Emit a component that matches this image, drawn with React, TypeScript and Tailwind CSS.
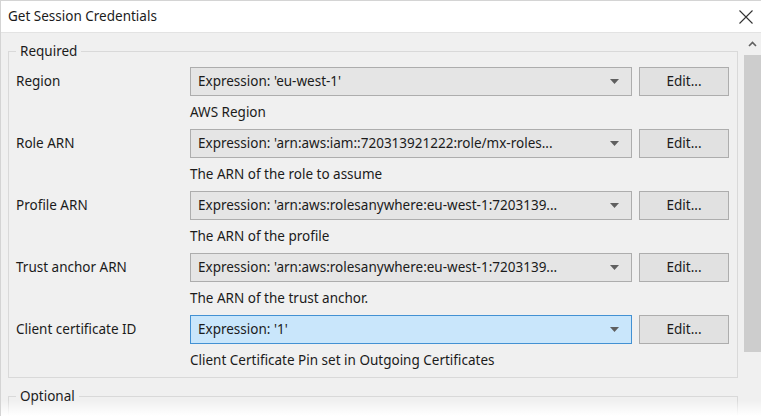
import React from 'react'

const FONT = { fontFamily: '"Noto Sans", "Open Sans", sans-serif' }

const ROWS = [
  { label: 'Region', value: "Expression: 'eu-west-1'", desc: 'AWS Region' },
  { label: 'Role ARN', value: "Expression: 'arn:aws:iam::720313921222:role/mx-roles...", desc: 'The ARN of the role to assume' },
  { label: 'Profile ARN', value: "Expression: 'arn:aws:rolesanywhere:eu-west-1:7203139...", desc: 'The ARN of the profile' },
  { label: 'Trust anchor ARN', value: "Expression: 'arn:aws:rolesanywhere:eu-west-1:7203139...", desc: 'The ARN of the trust anchor.' },
  { label: 'Client certificate ID', value: "Expression: '1'", desc: 'Client Certificate Pin set in Outgoing Certificates', focused: true },
]

function Caret() {
  return (
    <svg width="9" height="5" viewBox="0 0 9 5" className="shrink-0">
      <path d="M0 0 H9 L4.5 5 Z" fill="#5f5f5f" />
    </svg>
  )
}

function Row({ label, value, desc, focused }: { label: string; value: string; desc: string; focused?: boolean }) {
  return (
    <div>
      <div className="flex items-center h-[29px]">
        <div className="w-[174px] shrink-0 text-[13.5px] text-[#1b1b1b]">{label}</div>
        <div
          className={`w-[442px] h-[29px] shrink-0 flex items-center justify-between pl-[7px] pr-[12px] border text-[13.5px] text-[#1b1b1b] ${
            focused ? 'bg-[#c9e6fb] border-[#4391d3]' : 'bg-[#e5e5e5] border-[#adadad]'
          }`}
        >
          <span className="whitespace-nowrap overflow-hidden">{value}</span>
          <Caret />
        </div>
        <button className="ml-[7px] w-[90px] h-[29px] shrink-0 bg-[#e1e1e1] border border-[#adadad] text-[13.5px] text-[#1b1b1b]">
          Edit...
        </button>
      </div>
      <div className="h-[33px] flex items-center pl-[174px] text-[13.5px] text-[#1b1b1b]">{desc}</div>
    </div>
  )
}

export default function App() {
  return (
    <div style={FONT} className="relative w-[761px] h-[416px] overflow-hidden bg-[#f0f0f0] border-t border-l border-[#d4d4d4]">
      {/* Barra de título */}
      <div className="h-[32px] bg-white border-b border-[#e3e3e3] flex items-center justify-between pl-[7px] pr-[8px]">
        <span className="text-[13.5px] text-[#1b1b1b]">Get Session Credentials</span>
        <svg width="14" height="14" viewBox="0 0 14 14">
          <path d="M0.5 0.5 L13.5 13.5 M13.5 0.5 L0.5 13.5" stroke="#333" strokeWidth="1.1" />
        </svg>
      </div>

      <div className="flex h-[383px]">
        {/* Contenido */}
        <div className="flex-1 pl-[7px] pr-[6px] pt-[8px]">
          <fieldset className="border border-[#d9d9d9] px-[7px]">
            <legend className="px-[4px] text-[13.5px] leading-[20px] text-[#1b1b1b]">Required</legend>
            <div className="pt-[6px]">
              {ROWS.map(r => (
                <Row key={r.label} {...r} />
              ))}
            </div>
          </fieldset>
          <fieldset className="mt-[8px] border border-[#d9d9d9] h-[60px]">
            <legend className="ml-[7px] px-[4px] text-[13.5px] leading-[20px] text-[#1b1b1b]">Optional</legend>
          </fieldset>
        </div>

        {/* Scrollbar */}
        <div className="w-[17px] shrink-0 flex flex-col items-center bg-[#f0f0f0]">
          <div className="h-[20px] flex items-center justify-center pt-[2px]">
            <svg width="9" height="6" viewBox="0 0 9 6">
              <path d="M1 5 L4.5 1.5 L8 5" stroke="#606060" strokeWidth="1.6" fill="none" />
            </svg>
          </div>
          <div className="mt-[2px] w-[17px] h-[297px] bg-[#cdcdcd]" />
        </div>
      </div>

      {/* Desvanecido inferior */}
      <div className="absolute left-0 right-0 bottom-0 h-[16px] bg-gradient-to-b from-transparent to-white pointer-events-none" />
    </div>
  )
}
